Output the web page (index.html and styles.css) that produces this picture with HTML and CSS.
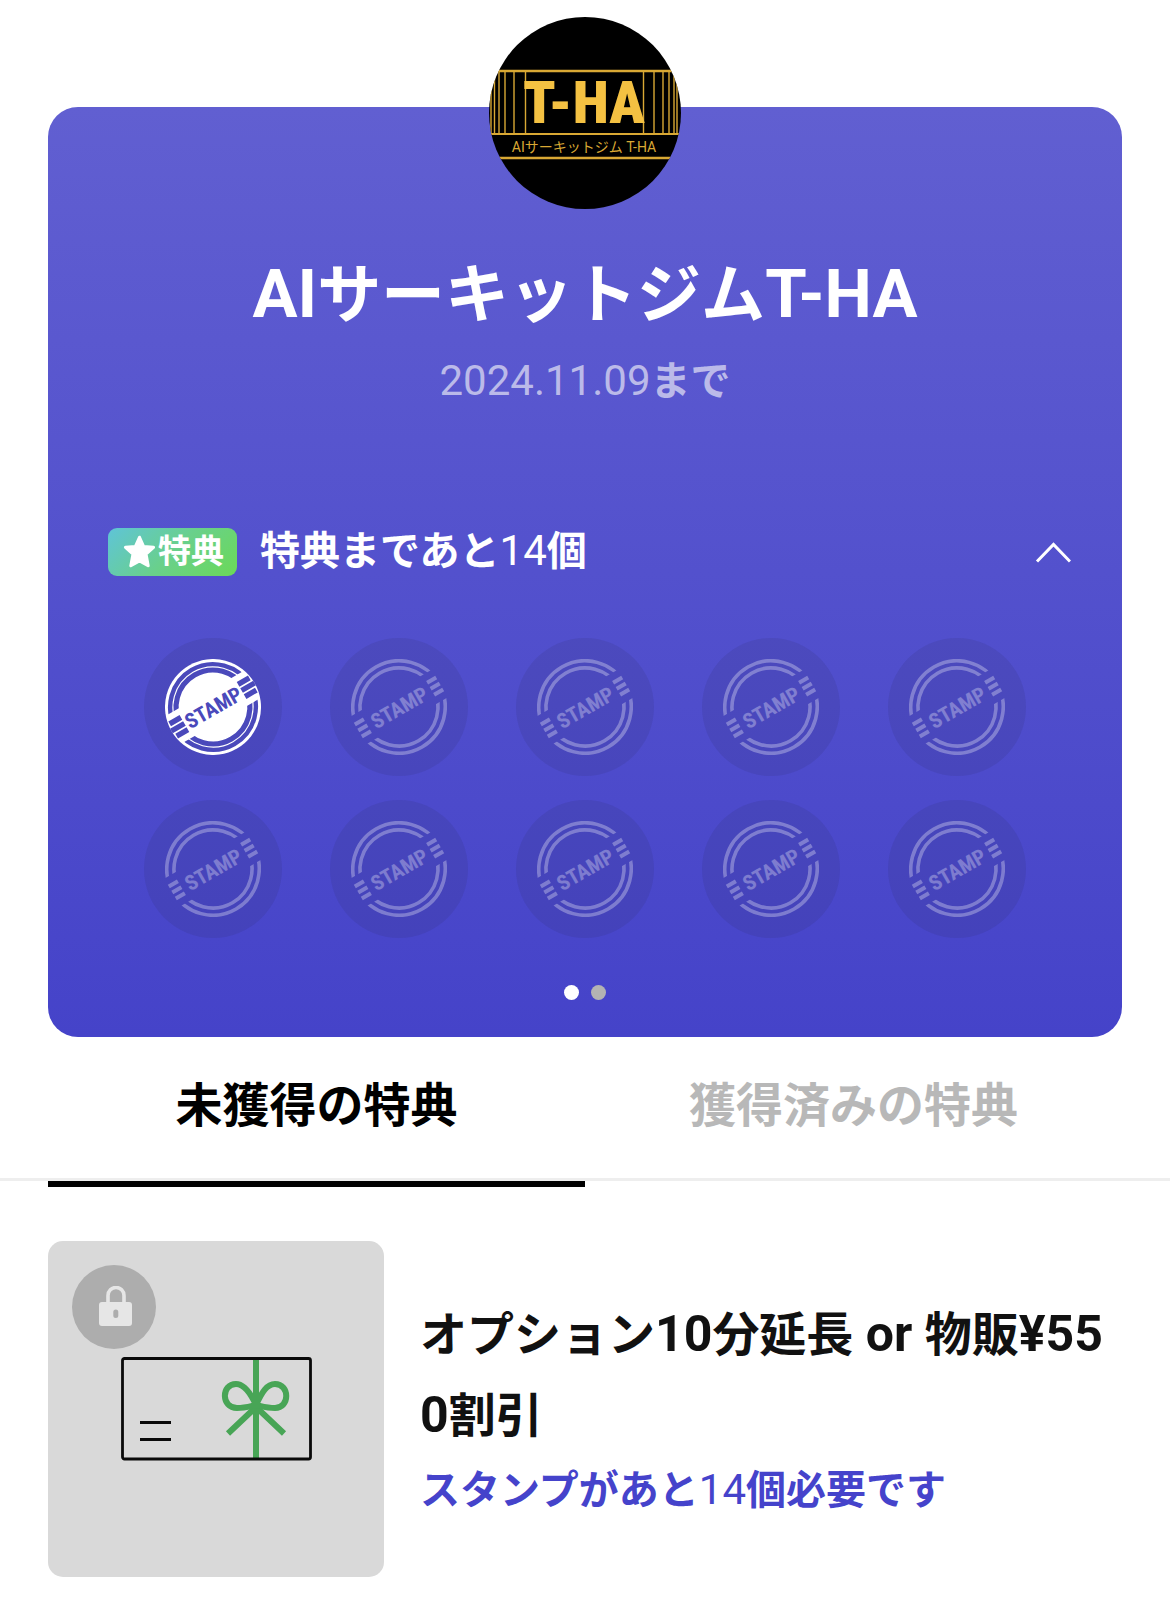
FILE: index.html
```html
<!DOCTYPE html>
<html lang="ja">
<head>
<meta charset="utf-8">
<meta name="viewport" content="width=device-width, initial-scale=1">
<title>AIサーキットジムT-HA</title>
<link rel="stylesheet" href="styles.css">
</head>
<body>
<svg class="defs" aria-hidden="true">
  <defs>
    <clipPath id="halves"><path d="M-50-50H50V-16H-50zM-50 16H50V50H-50z"/></clipPath>
    <symbol id="stamp-empty" viewBox="-48 -48 96 96">
      <g transform="rotate(-30)">
        <g clip-path="url(#halves)" fill="none" stroke="#fff" stroke-width="3.600">
          <circle r="46.200"/><circle r="39"/>
        </g>
        <path d="M36.500-7H47M36.500 0H47M36.500 7H47M-36.500-7H-47M-36.500 0H-47M-36.500 7H-47" stroke="#fff" stroke-width="4"/>
        <text class="stamp-word" y="8" fill="#fff">STAMP</text>
      </g>
    </symbol>
    <symbol id="stamp-filled" viewBox="-48 -48 96 96">
      <g transform="rotate(-30)">
        <circle r="48" fill="#fff"/>
        <g clip-path="url(#halves)" fill="none" stroke="#4a49bb">
          <circle r="42.800" stroke-width="4.400"/><circle r="36.900" stroke-width="5.200"/>
        </g>
        <path d="M33-7H46M33 0H48M33 7H46M-33-7H-46M-33 0H-48M-33 7H-46" stroke="#4a49bb" stroke-width="5.400"/>
        <text class="stamp-word" y="8" fill="#4a49bb">STAMP</text>
      </g>
    </symbol>
  </defs>
</svg>

<main class="page">
  <section class="card">
    <svg class="avatar" viewBox="0 0 192 192" role="img" aria-label="AIサーキットジム T-HA">
      <defs><clipPath id="round"><circle cx="96" cy="96" r="96"/></clipPath></defs>
      <g clip-path="url(#round)">
        <rect width="192" height="192"/>
        <g fill="none" stroke="#d9a834">
          <path d="M0 54H192M0 141H192" stroke-width="2.500"/>
          <path d="M0 117H192" stroke-width="1.800"/>
          <path d="M2 54V117M5.500 54V117M10 54V117M16 54V117M25 54V117M36.500 54V117M154.500 54V117M165 54V117M174 54V117M180 54V117M185 54V117M188 54V117" stroke-width="1.400"/>
        </g>
        <text class="logo-word" x="95" y="106">T-HA</text>
        <text class="logo-sub" x="95" y="135">AIサーキットジム T-HA</text>
      </g>
    </svg>
    <h1 class="title"><span class="title-latin">AI</span>サーキットジム<span class="title-latin">T-HA</span></h1>
    <p class="expiry"><span class="latin">2024.11.09</span>まで</p>

    <div class="progress">
      <span class="badge">
        <svg class="star" viewBox="0 0 32 32" aria-hidden="true"><path d="M16 2.200l3.900 8.900 9.700.9-7.300 6.500 2.100 11.300-8.400-4.600-8.400 4.600 2.100-11.300L2.400 12l9.700-.9z" fill="#fff" stroke="#fff" stroke-width="3" stroke-linejoin="round"/></svg>特典</span>
      <p class="remaining">特典まであと<span class="latin">14</span>個</p>
      <button class="toggle" type="button" aria-label="閉じる" aria-expanded="true">
        <svg viewBox="0 0 36 24" width="36" height="24"><path d="M2 21.500L18.500 4.500 35 21.500" fill="none" stroke="#fff" stroke-width="3"/></svg>
      </button>
    </div>

    <ul class="stamps">
      <li class="stamp"><svg class="mark"><use href="#stamp-filled"/></svg></li>
      <li class="stamp"><svg class="mark empty"><use href="#stamp-empty"/></svg></li>
      <li class="stamp"><svg class="mark empty"><use href="#stamp-empty"/></svg></li>
      <li class="stamp"><svg class="mark empty"><use href="#stamp-empty"/></svg></li>
      <li class="stamp"><svg class="mark empty"><use href="#stamp-empty"/></svg></li>
      <li class="stamp"><svg class="mark empty"><use href="#stamp-empty"/></svg></li>
      <li class="stamp"><svg class="mark empty"><use href="#stamp-empty"/></svg></li>
      <li class="stamp"><svg class="mark empty"><use href="#stamp-empty"/></svg></li>
      <li class="stamp"><svg class="mark empty"><use href="#stamp-empty"/></svg></li>
      <li class="stamp"><svg class="mark empty"><use href="#stamp-empty"/></svg></li>
    </ul>

    <div class="dots">
      <button class="dot current" type="button" aria-label="1ページ目"></button>
      <button class="dot" type="button" aria-label="2ページ目"></button>
    </div>
  </section>

  <div class="tabs" role="tablist">
    <button class="tab active" type="button" role="tab" aria-selected="true">未獲得の特典</button>
    <button class="tab" type="button" role="tab" aria-selected="false">獲得済みの特典</button>
  </div>

  <article class="reward">
    <div class="thumb">
      <svg class="gift" viewBox="-1 0 192 104" aria-hidden="true">
        <g fill="none" stroke="#48a556" stroke-width="6">
          <path d="M135 2V102M135 50L107 76.500M135 50L163 76.500"/>
          <path d="M135 48C129 35 123 27 115 27C100 27 100 51 116 51C124 51 130 49 135 48C141 35 146 27 154 27C169 27 169 51 154 51C146 51 140 49 135 48z"/>
        </g>
        <g fill="none" stroke="#0a0a0a" stroke-width="2.800">
          <rect x="1.500" y="1.500" width="188" height="100.500" rx="2"/>
          <path d="M19 65.500H50M19 82.500H50"/>
        </g>
      </svg>
      <span class="lock">
        <svg viewBox="0 0 36 42" width="36" height="42" aria-hidden="true">
          <path d="M12 18V9.500a8 8 0 0 1 16 0V18" fill="none" stroke="#e6e6e6" stroke-width="3.600"/>
          <rect x="3" y="16" width="33" height="24" rx="3" fill="#e6e6e6"/>
          <rect x="17.300" y="23.500" width="5" height="8.500" rx="2.500" fill="#adadad"/>
        </svg>
      </span>
    </div>
    <div class="info">
      <h2 class="name">オプション<span class="name-latin">10</span>分延長<span class="name-latin"> or </span>物販<span class="name-latin">¥550</span>割引</h2>
      <p class="need">スタンプがあと<span class="latin">14</span>個必要です</p>
    </div>
  </article>
</main>
</body>
</html>
```
FILE: styles.css
```css
* {
  box-sizing: border-box;
}

body {
  margin: 0;
  background: #fff;
  color: #111;
  font-family: Roboto, "Noto Sans CJK JP", sans-serif;
}

h1,
h2,
p,
ul {
  margin: 0;
  padding: 0;
}

button {
  padding: 0;
  border: 0;
  background: none;
  font: inherit;
  cursor: pointer;
}

.defs {
  position: absolute;
  width: 0;
  height: 0;
}

.page {
  padding-top: 107px;
}

.card {
  display: flex;
  flex-direction: column;
  margin: 0 48px;
  padding-bottom: 37px;
  border-radius: 30px;
  background: linear-gradient(#615fd1, #4543c9);
  color: #fff;
}

.avatar {
  align-self: center;
  width: 192px;
  height: 192px;
  margin-top: -90px;
}

.logo-word,
.stamp-word {
  font-family: "Roboto Condensed", Roboto, sans-serif;
  font-weight: 700;
  text-anchor: middle;
}

.logo-word {
  fill: #f4c142;
  font-size: 59px;
  font-weight: 900;
}

.logo-sub {
  fill: #d9a834;
  font-family: Roboto, "Noto Sans CJK JP", sans-serif;
  font-size: 14px;
  text-anchor: middle;
}

.stamp-word {
  font-size: 21px;
}

.title {
  margin-top: 37px;
  font-size: 64px;
  font-weight: 700;
  line-height: 96px;
  text-align: center;
}

.title-latin {
  font-size: 67px;
}

.latin {
  font-size: 42px;
  font-weight: 400;
}

.expiry {
  margin-top: 7px;
  color: #bbbae9;
  font-size: 40px;
  font-weight: 700;
  line-height: 60px;
  text-align: center;
}

.progress {
  display: flex;
  align-items: center;
  margin-top: 109px;
  padding: 0 51px 0 60px;
}

.badge {
  display: flex;
  align-items: center;
  gap: 2px;
  height: 48px;
  padding: 0 13px 0 15px;
  border-radius: 9px;
  background: linear-gradient(135deg, #5fc4d8, #69d08c 50%, #6bd957);
  font-size: 33px;
  font-weight: 700;
  line-height: 48px;
}

.star {
  width: 33px;
  height: 33px;
}

.remaining {
  flex: 1;
  margin-left: 23px;
  font-size: 40px;
  font-weight: 700;
  line-height: 60px;
}

.toggle {
  display: flex;
}

.stamps {
  display: grid;
  grid-template-columns: repeat(5, 138px);
  justify-content: space-between;
  row-gap: 24px;
  margin-top: 56px;
  padding: 0 96px;
  list-style: none;
}

.stamp {
  display: flex;
  align-items: center;
  justify-content: center;
  height: 138px;
  border-radius: 50%;
  background: rgba(40, 40, 80, 0.12);
}

.mark {
  width: 96px;
  height: 96px;
}

.empty {
  opacity: 0.3;
}

.dots {
  display: flex;
  justify-content: center;
  gap: 12px;
  margin-top: 47px;
}

.dot {
  width: 15px;
  height: 15px;
  border-radius: 50%;
  background: #b3b3b3;
}

.current {
  background: #fff;
}

.tabs {
  display: flex;
  padding: 0 48px;
  border-bottom: 3px solid #eee;
}

.tab {
  position: relative;
  flex: 1;
  height: 141px;
  padding-bottom: 12px;
  color: #b8b8b8;
  font-size: 47px;
  font-weight: 700;
}

.active {
  color: #000;
}

.active::after {
  content: "";
  position: absolute;
  right: 0;
  bottom: -9px;
  left: 0;
  height: 6px;
  background: #000;
}

.reward {
  display: flex;
  align-items: center;
  gap: 36px;
  padding: 60px 48px 36px;
}

.thumb {
  position: relative;
  display: flex;
  flex: none;
  align-items: center;
  justify-content: center;
  width: 336px;
  height: 336px;
  border-radius: 15px;
  background: #d9d9d9;
}

.gift {
  width: 192px;
  height: 104px;
}

.lock {
  position: absolute;
  top: 24px;
  left: 24px;
  display: flex;
  align-items: center;
  justify-content: center;
  width: 84px;
  height: 84px;
  border-radius: 50%;
  background: #adadad;
}

.info {
  flex: 1;
}

.name {
  font-size: 47px;
  font-weight: 700;
  line-height: 81px;
  word-break: break-all;
}

.name-latin {
  font-size: 50px;
}

.need {
  color: #4543cb;
  font-size: 40px;
  font-weight: 700;
  line-height: 68px;
}
```
